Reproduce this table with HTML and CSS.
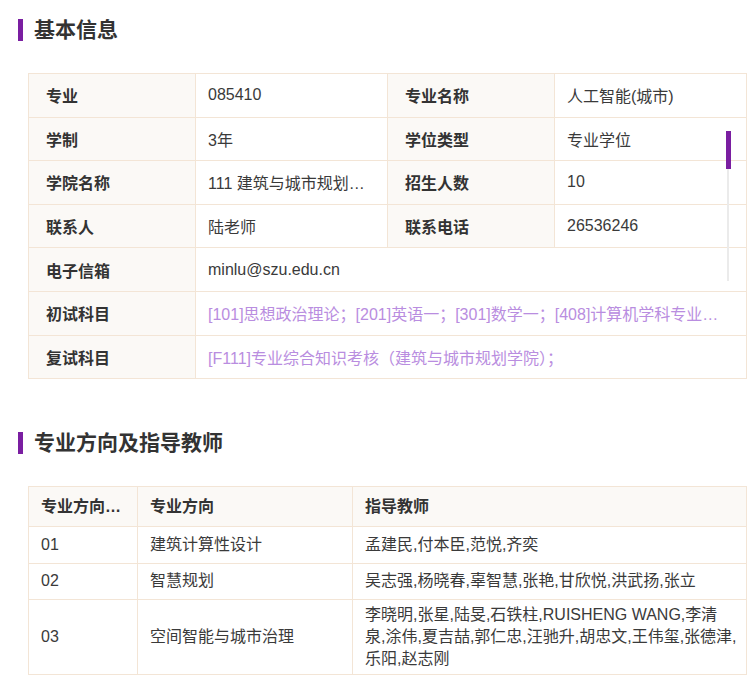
FILE: index.html
```html
<!DOCTYPE html>
<html lang="zh-CN">
<head>
<meta charset="utf-8">
<title>基本信息</title>
<link rel="stylesheet" href="styles.css">
</head>
<body>
<div class="page">
  <h2 class="sec-title"><span class="bar"></span>基本信息</h2>
  <div class="info-wrap">
    <table class="info">
      <colgroup><col class="c-l"><col class="c-v"><col class="c-l"><col class="c-v"></colgroup>
      <tr><th>专业</th><td>085410</td><th>专业名称</th><td>人工智能(城市)</td></tr>
      <tr><th>学制</th><td>3年</td><th>学位类型</th><td>专业学位</td></tr>
      <tr><th>学院名称</th><td>111 建筑与城市规划学院</td><th>招生人数</th><td>10</td></tr>
      <tr><th>联系人</th><td>陆老师</td><th>联系电话</th><td>26536246</td></tr>
      <tr><th>电子信箱</th><td colspan="3">minlu@szu.edu.cn</td></tr>
      <tr><th>初试科目</th><td colspan="3" class="link">[101]思想政治理论；[201]英语一；[301]数学一；[408]计算机学科专业基础</td></tr>
      <tr><th>复试科目</th><td colspan="3" class="link">[F111]专业综合知识考核（建筑与城市规划学院）；</td></tr>
    </table>
    <div class="scroll-track"></div>
    <div class="scroll-thumb"></div>
  </div>

  <h2 class="sec-title sec2"><span class="bar"></span>专业方向及指导教师</h2>
  <table class="dir">
    <colgroup><col class="d1"><col class="d2"><col class="d3"></colgroup>
    <thead>
      <tr><th>专业方向代码</th><th>专业方向</th><th>指导教师</th></tr>
    </thead>
    <tbody>
      <tr><td>01</td><td>建筑计算性设计</td><td>孟建民,付本臣,范悦,齐奕</td></tr>
      <tr><td>02</td><td>智慧规划</td><td>吴志强,杨晓春,辜智慧,张艳,甘欣悦,洪武扬,张立</td></tr>
      <tr class="tall"><td>03</td><td>空间智能与城市治理</td><td class="teachers">李晓明,张星,陆旻,石铁柱,RUISHENG WANG,李清<br>泉,涂伟,夏吉喆,郭仁忠,汪驰升,胡忠文,王伟玺,张德津,<br>乐阳,赵志刚</td></tr>
    </tbody>
  </table>
</div>
</body>
</html>
```

FILE: styles.css
```css
html, body {
  margin: 0;
  padding: 0;
  background: #ffffff;
}
body {
  font-family: "Liberation Sans", "Noto Sans CJK SC", sans-serif;
  color: #333333;
  width: 752px;
  overflow: hidden;
}
.page {
  padding: 19px 0 0 18px;
}
.sec-title {
  display: flex;
  align-items: center;
  margin: 0 0 32px 0;
  height: 22px;
  font-size: 21px;
  font-weight: bold;
  color: #333333;
  line-height: 22px;
}
.sec-title .bar {
  width: 5px;
  height: 22px;
  background: #7a1ea1;
  margin-right: 11px;
}
.sec2 {
  margin-top: 53px;
}
.info-wrap {
  position: relative;
  margin-left: 10px;
  width: 718px;
}
table {
  border-collapse: collapse;
  table-layout: fixed;
  width: 718px;
  font-size: 16px;
}
.info .c-l { width: 167px; }
.info .c-v { width: 192px; }
.info th, .info td {
  border: 1px solid #f3e5d6;
  height: 42.6px;
  padding: 0 12px;
  white-space: nowrap;
  overflow: hidden;
  text-overflow: ellipsis;
  text-align: left;
  vertical-align: middle;
}
.info th {
  background: #fbf9f6;
  font-weight: bold;
  padding-left: 17px;
  color: #333333;
}
.info td {
  color: #3a3a3a;
}
.info td.link {
  color: #b98de0;
}
.scroll-track {
  position: absolute;
  left: 699px;
  top: 58px;
  width: 2px;
  height: 150px;
  background: #ebebeb;
}
.scroll-thumb {
  position: absolute;
  left: 698px;
  top: 58px;
  width: 5px;
  height: 38px;
  background: #7a1ea1;
}
.dir {
  margin-left: 10px;
}
.dir .d1 { width: 109px; }
.dir .d2 { width: 215px; }
.dir .d3 { width: 394px; }
.dir th, .dir td {
  border: 1px solid #f3e5d6;
  padding: 5px 12px;
  text-align: left;
  vertical-align: middle;
  line-height: 22px;
  color: #3a3a3a;
}
.dir th {
  background: #fbf9f6;
  font-weight: bold;
  height: 29px;
  white-space: nowrap;
  overflow: hidden;
  text-overflow: ellipsis;
  color: #333333;
}
.dir td.teachers {
  padding-right: 4px;
  white-space: nowrap;
}
.dir tbody tr {
  height: 36.5px;
}
.dir tbody tr.tall td {
  padding-top: 4px;
  padding-bottom: 4px;
}
```
